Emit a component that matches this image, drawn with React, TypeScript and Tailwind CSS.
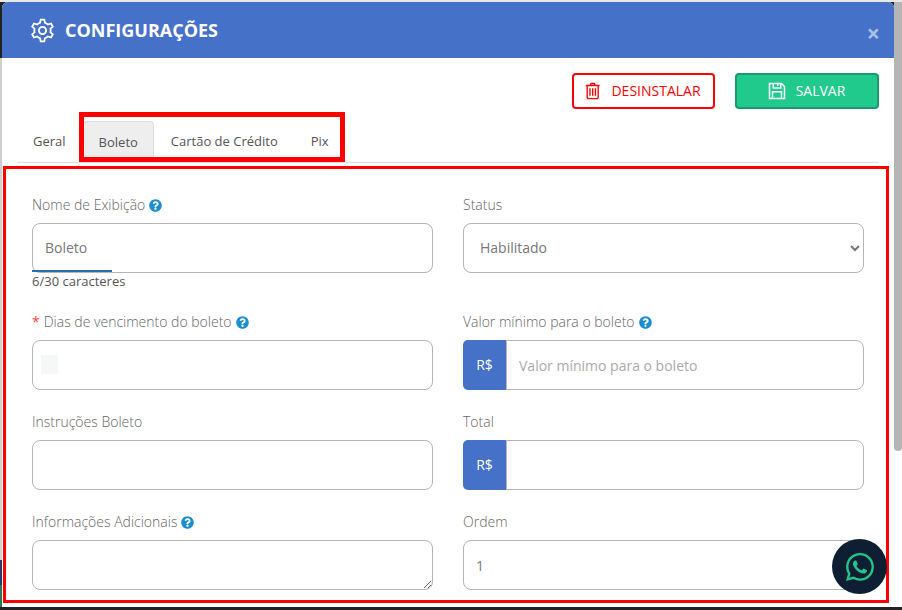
import { BsWhatsapp } from "react-icons/bs";
import { FaQuestionCircle } from "react-icons/fa";
import { LiaCogSolid, LiaSave, LiaTrashAlt } from "react-icons/lia";

const boxClass =
  "h-[50px] w-full rounded-lg border border-[#b5b5b5] bg-white px-3 text-sm text-[#777] outline-none placeholder:text-[#aaa]";

function Help() {
  return <FaQuestionCircle className="ml-1 inline-block text-[13px] text-[#1b8fd0]" />;
}

function Label({ text, help, required }: { text: string; help?: boolean; required?: boolean }) {
  return (
    <label className="mb-[8px] flex h-5 items-center text-sm leading-5 font-light text-[#666]">
      {required ? <span className="mr-1 font-normal text-[#f44]">*</span> : null}
      {text}
      {help ? <Help /> : null}
    </label>
  );
}

function MoneyInput({ placeholder }: { placeholder?: string }) {
  return (
    <div className="flex h-[50px]">
      <span className="flex w-[43px] shrink-0 items-center justify-center rounded-l-[5px] bg-[#4571c9] text-sm text-white">
        R$
      </span>
      <input
        placeholder={placeholder}
        className="min-w-0 flex-1 rounded-r-lg border border-[#b5b5b5] bg-white px-3 pt-[1px] text-sm text-[#777] outline-none placeholder:text-[#aaa]"
      />
    </div>
  );
}

export default function App() {
  return (
    <div
      className="relative flex h-[610px] w-[902px] overflow-hidden bg-[#222] pt-[2px] pb-[3px]"
      style={{ fontFamily: '"Open Sans", sans-serif' }}
    >
      <div className="absolute top-0 left-0 h-[2px] w-full bg-[#e8e8e8]" />

      {/* page behind the modal, only a sliver shows */}
      <div className="flex w-[2px] shrink-0 flex-col">
        <div className="h-[56px] bg-[#222]" />
        <div className="flex-1 bg-[#cfcfcf]" />
        <div className="h-[25px] bg-[#2a3a6a]" />
        <div className="h-[22px] bg-[#2a7a50]" />
      </div>

      <div className="flex min-w-0 flex-1 flex-col overflow-hidden rounded-t-md bg-white">
        <header className="flex h-[56px] shrink-0 items-center justify-between bg-[#4571c9] pl-[26px] pr-[14px]">
          <div className="flex items-center gap-[8px] text-white">
            <LiaCogSolid className="text-[29px]" />
            <h1 className="mb-[1px] text-lg leading-none font-bold">CONFIGURAÇÕES</h1>
          </div>
          <span className="mt-[6px] text-[23px] leading-none font-bold text-white/55">×</span>
        </header>

        <div className="flex justify-end gap-5 pt-[15px] pr-[15px]">
          <button className="flex h-9 w-[143px] items-center justify-center gap-[8px] rounded border-2 border-[#f00] bg-white pr-[5px] text-sm text-[#f00]">
            <LiaTrashAlt className="text-[22px]" />
            DESINSTALAR
          </button>
          <button className="flex h-9 w-[144px] items-center justify-center gap-[7px] rounded border-2 border-[#1a9a6e] bg-[#1fca8c] pr-[4px] text-sm text-white">
            <LiaSave className="text-[24px]" />
            SALVAR
          </button>
        </div>

        <nav className="mt-3 ml-[15px] mr-[15px] flex h-[42px] items-end border-b border-[#ddd] text-[13px] text-[#555]">
          <span className="pr-[17px] pl-4 pb-[11px]">Geral</span>
          <span className="flex h-[41px] items-center rounded-t border border-b-0 border-[#ddd] bg-[#eee] px-[15px] pt-[1px]">
            Boleto
          </span>
          <span className="px-[17px] pb-[11px]">Cartão de Crédito</span>
          <span className="px-4 pb-[11px]">Pix</span>
        </nav>

        <div className="grid grid-cols-[401px_401px] gap-x-[30px] px-[30px] pt-[32px]">
          <div className="h-[117px]">
            <Label text="Nome de Exibição" help />
            <div className="relative">
              <input defaultValue="Boleto" className={`${boxClass} pb-[2px]`} />
              <div className="absolute bottom-[1px] left-0 h-[2px] w-20 bg-[#2a6eb0]" />
            </div>
            <p className="text-[13px] leading-[17px] text-[#555]">6/30 caracteres</p>
          </div>
          <div className="h-[117px]">
            <Label text="Status" />
            <select defaultValue="Habilitado" className={`${boxClass} !px-3 pb-[2px]`}>
              <option>Habilitado</option>
            </select>
          </div>

          <div className="h-[100px]">
            <Label text="Dias de vencimento do boleto" help required />
            <div className="relative">
              <input className={boxClass} />
              <div className="absolute top-[15px] left-[9px] h-[19px] w-[17px] bg-[#f6f7f7]" />
            </div>
          </div>
          <div className="h-[100px]">
            <Label text="Valor mínimo para o boleto" help />
            <MoneyInput placeholder="Valor mínimo para o boleto" />
          </div>

          <div className="h-[100px]">
            <Label text="Instruções Boleto" />
            <input className={boxClass} />
          </div>
          <div className="h-[100px]">
            <Label text="Total" />
            <MoneyInput />
          </div>

          <div>
            <Label text="Informações Adicionais" help />
            <textarea className={`${boxClass} block py-2`} />
          </div>
          <div>
            <Label text="Ordem" />
            <input defaultValue="1" className={boxClass} />
          </div>
        </div>
      </div>

      <div className="w-2 shrink-0 bg-white">
        <div className="h-[449px] rounded-b bg-[#b5b5b5]" />
      </div>

      {/* annotations drawn over the form */}
      <div className="pointer-events-none absolute top-[112px] left-[79px] h-[50px] w-[266px] border-[5px] border-[#f00]" />
      <div className="pointer-events-none absolute top-[166px] left-[3px] h-[437px] w-[886px] border-[3px] border-[#f00]" />

      <button className="absolute top-[539px] left-[832px] flex h-[55px] w-[55px] items-center justify-center rounded-full bg-[#0f1f33] text-[#22c58a]">
        <BsWhatsapp className="text-[28px]" />
      </button>
    </div>
  );
}
